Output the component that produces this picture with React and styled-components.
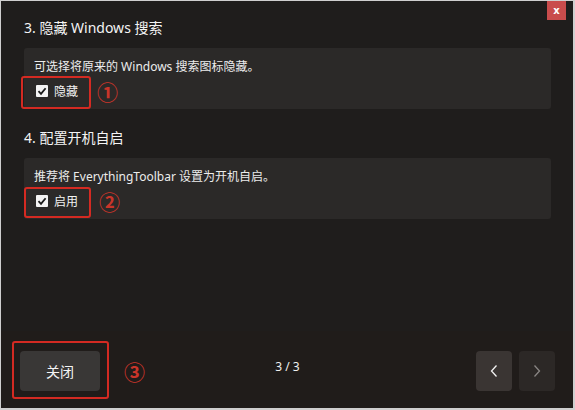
import styled, { createGlobalStyle } from "styled-components";

const GlobalStyle = createGlobalStyle`
  html, body {
    margin: 0;
    padding: 0;
    background: #cfcfcf;
  }
  body {
    font-family: "Noto Sans", "Noto Sans CJK SC", sans-serif;
    color: #f2f2f2;
  }
`;

const Window = styled.div`
  position: relative;
  width: 572px;
  height: 407px;
  margin: 1px 0 0 1px;
  background: #1f1d1c;
  display: flex;
  flex-direction: column;
  overflow: hidden;
`;

const CloseX = styled.button`
  position: absolute;
  top: 0;
  right: 7px;
  width: 19px;
  height: 19px;
  border: none;
  padding: 0;
  background: #c94c4c;
  color: #fff;
  font-family: "DejaVu Sans", sans-serif;
  font-size: 10px;
  font-weight: bold;
  line-height: 19px;
  text-align: center;
`;

const Content = styled.div`
  flex: 1;
  padding: 17px 22px 0 22px;
  display: flex;
  flex-direction: column;
`;

const Heading = styled.div`
  font-size: 14px;
  line-height: 20px;
  margin-top: ${(p) => p.$top || 0}px;
  margin-bottom: 10px;
  padding-left: 1px;
  color: #f4f4f4;
`;

const Card = styled.div`
  background: #2b2928;
  border-radius: 3px;
  padding: 10px 10px 8px 10px;
  margin-left: 1px;
  display: flex;
  flex-direction: column;
  gap: 5px;
`;

const Desc = styled.div`
  font-size: 12px;
  line-height: 18px;
  color: #ececec;
`;

const OptionLine = styled.div`
  display: flex;
  align-items: center;
  height: 20px;
`;

const CheckRow = styled.label`
  position: relative;
  display: inline-flex;
  align-items: center;
  gap: 6px;
  margin-left: 2px;
  font-size: 12px;
  color: #f2f2f2;
`;

const Mark = styled.div`
  position: absolute;
  top: ${(p) => p.$t}px;
  bottom: ${(p) => p.$b}px;
  left: ${(p) => p.$l}px;
  right: ${(p) => p.$r}px;
  border: 2px solid #d42a22;
  border-radius: 3px;
  pointer-events: none;
`;

const Box = styled.span`
  width: 12px;
  height: 12px;
  background: #f4f4f4;
  border-radius: 1px;
  display: flex;
  align-items: center;
  justify-content: center;
`;

const Circled = styled.span`
  margin-left: ${(p) => p.$gap}px;
  font-family: "Noto Sans CJK SC", sans-serif;
  font-size: 21px;
  font-weight: 700;
  line-height: 20px;
  color: #c9352a;
`;

const Footer = styled.div`
  height: 77px;
  background: #201c1a;
  display: grid;
  grid-template-columns: 1fr auto 1fr;
  align-items: start;
  padding: 20px 18px 0 19px;
  box-sizing: border-box;
`;

const Left = styled.div`
  display: flex;
  align-items: center;
`;

const ButtonWrap = styled.div`
  position: relative;
  display: inline-flex;
`;

const Button = styled.button`
  width: 80px;
  height: 40px;
  border: none;
  border-radius: 4px;
  background: #393736;
  color: #f4f4f4;
  font-family: "Noto Sans CJK SC", sans-serif;
  font-size: 14px;
`;

const Pager = styled.div`
  font-size: 12px;
  color: #f0f0f0;
  line-height: 16px;
  padding-top: 8px;
  text-align: center;
`;

const Nav = styled.div`
  display: flex;
  gap: 7px;
  justify-content: flex-end;
`;

const NavBtn = styled.button`
  width: 36px;
  height: 40px;
  border: none;
  border-radius: 4px;
  padding: 0;
  background: ${(p) => (p.disabled ? "#2c2826" : "#3a3533")};
  display: flex;
  align-items: center;
  justify-content: center;
`;

const Check = () => (
  <svg width="10" height="10" viewBox="0 0 10 10">
    <polyline points="1.5,5.2 4,7.8 8.6,2.2" fill="none" stroke="#1a1a1a" strokeWidth="1.8" />
  </svg>
);

const Chevron = ({ dir, color }) => (
  <svg width="10" height="14" viewBox="0 0 10 14">
    <polyline
      points={dir === "left" ? "7.5,1.5 2.5,7 7.5,12.5" : "2.5,1.5 7.5,7 2.5,12.5"}
      fill="none"
      stroke={color}
      strokeWidth="1.3"
    />
  </svg>
);

const Option = ({ label, num, mark }) => (
  <OptionLine>
    <CheckRow>
      <Box>
        <Check />
      </Box>
      {label}
      <Mark {...mark} />
    </CheckRow>
    <Circled $gap={num.gap}>{num.text}</Circled>
  </OptionLine>
);

export default function App() {
  return (
    <>
      <GlobalStyle />
      <Window>
        <CloseX>x</CloseX>
        <Content>
          <Heading>3. 隐藏 Windows 搜索</Heading>
          <Card>
            <Desc>可选择将原来的 Windows 搜索图标隐藏。</Desc>
            <Option
              label="隐藏"
              num={{ text: "①", gap: 19 }}
              mark={{ $t: -6, $b: -9, $l: -15, $r: -13 }}
            />
          </Card>
          <Heading $top={19}>4. 配置开机自启</Heading>
          <Card>
            <Desc>推荐将 EverythingToolbar 设置为开机自启。</Desc>
            <Option
              label="启用"
              num={{ text: "②", gap: 21 }}
              mark={{ $t: -5, $b: -8, $l: -12, $r: -13 }}
            />
          </Card>
        </Content>
        <Footer>
          <Left>
            <ButtonWrap>
              <Button>关闭</Button>
              <Mark $t={-10} $b={-8} $l={-8} $r={-9} />
            </ButtonWrap>
            <Circled $gap={24}>③</Circled>
          </Left>
          <Pager>3 / 3</Pager>
          <Nav>
            <NavBtn>
              <Chevron dir="left" color="#f2f2f2" />
            </NavBtn>
            <NavBtn disabled>
              <Chevron dir="right" color="#8a8684" />
            </NavBtn>
          </Nav>
        </Footer>
      </Window>
    </>
  );
}
